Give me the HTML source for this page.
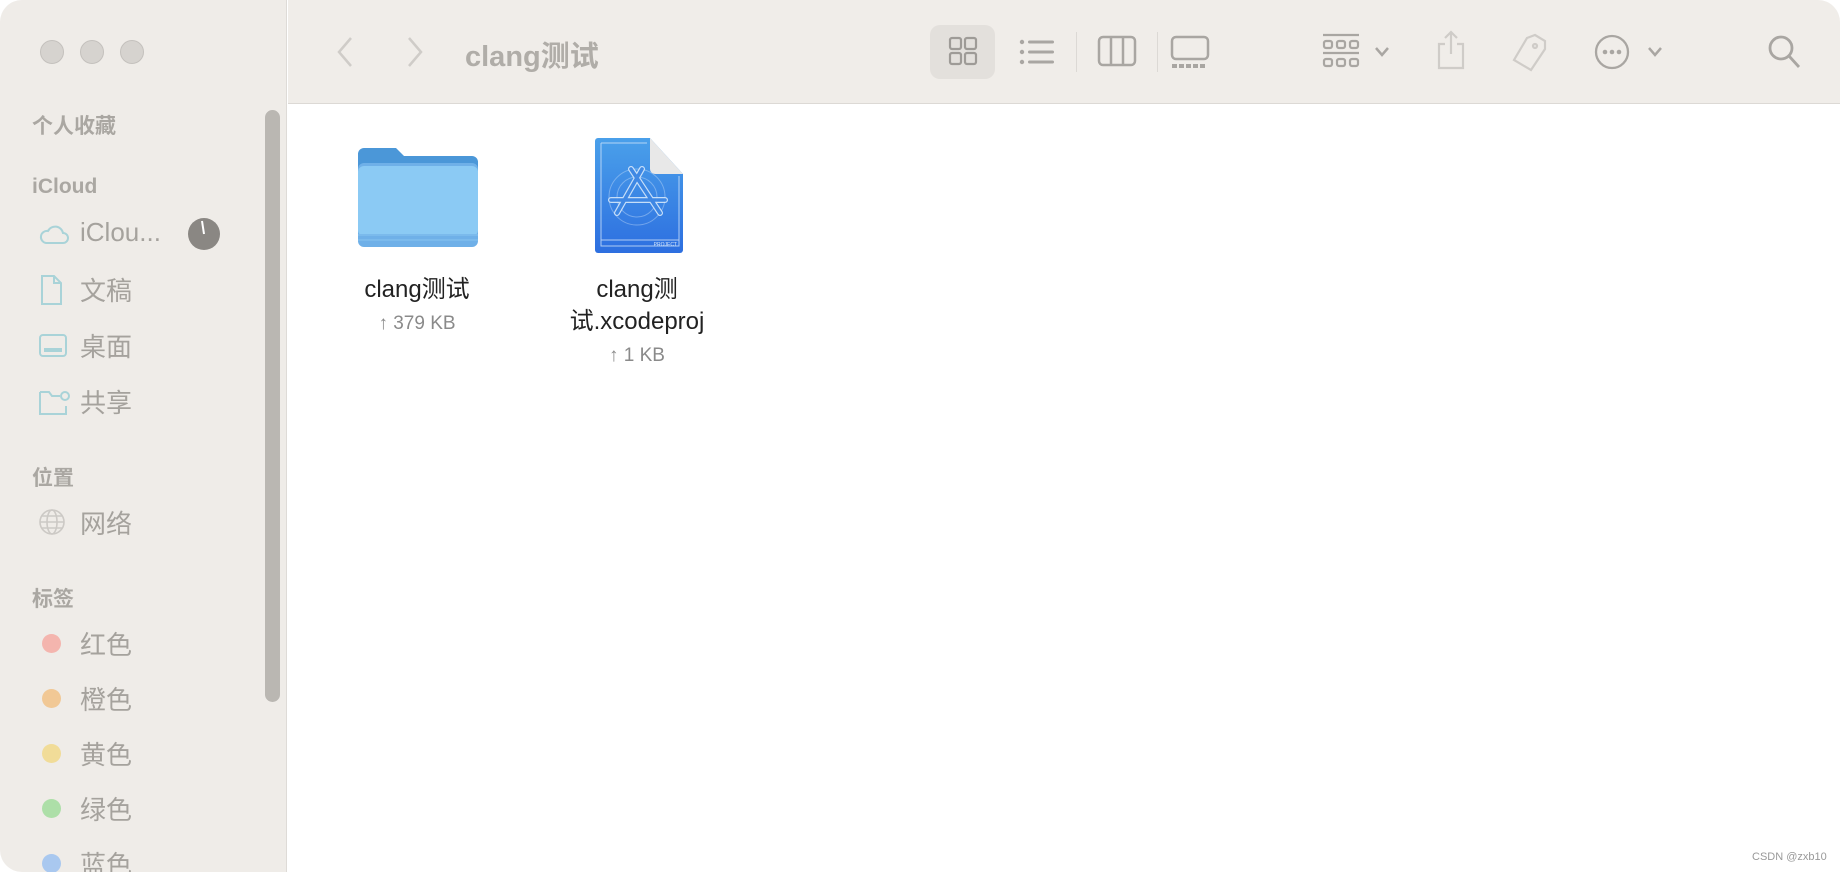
<!DOCTYPE html>
<html><head><meta charset="utf-8">
<style>
*{margin:0;padding:0;box-sizing:border-box}
body{width:1840px;height:872px;overflow:hidden;background:#fff;font-family:"Liberation Sans","Noto Sans CJK SC",sans-serif;position:relative}
.win{position:absolute;left:0;top:0;width:1840px;height:872px;border-radius:22px 22px 0 22px;overflow:hidden;background:#fff}
.side{position:absolute;left:0;top:0;width:287px;height:872px;background:#efece8;border-right:1px solid #dedbd7}
.tool{position:absolute;left:288px;top:0;right:0;height:104px;background:#f0ede9;border-bottom:1px solid #dcd9d5}
.dot{position:absolute;top:40px;width:24px;height:24px;border-radius:50%;background:#d6d3cf;border:1px solid #c4c1bd}
.h{position:absolute;left:32px;font-size:21px;font-weight:bold;color:#aaa7a2}
.it{position:absolute;left:80px;font-size:26px;color:#a5a29d}
.ic{position:absolute;left:38px}
.tag{position:absolute;left:42px;width:19px;height:19px;border-radius:50%}
.scroll{position:absolute;left:265px;top:110px;width:15px;height:592px;border-radius:8px;background:#bab7b2}
.t{position:absolute;color:#aaa7a2}
.lbl{position:absolute;text-align:center;font-size:24px;color:#222;line-height:32px}
.sz{font-size:19px;color:#8a8a8a;line-height:28px}
</style></head><body>
<div class="win">
<div class="side">
 <div class="dot" style="left:40px"></div><div class="dot" style="left:80px"></div><div class="dot" style="left:120px"></div>
 <div class="h" style="top:110px">个人收藏</div>
 <div class="h" style="top:175px">iCloud</div>
 <svg class="ic" style="top:220px" width="32" height="28" viewBox="0 0 32 28"><path d="M8 23h17a5 5 0 0 0 0-10 8 8 0 0 0-15-2 6 6 0 0 0-2 12z" fill="none" stroke="#a9d3d8" stroke-width="2"/></svg>
 <div class="it" style="top:217px">iClou...</div>
 <svg style="position:absolute;left:188px;top:218px" width="32" height="32"><circle cx="16" cy="16" r="16" fill="#8a8783"/><path d="M16 16L14 3" stroke="#fff" stroke-width="2"/></svg>
 <svg class="ic" style="top:274px" width="28" height="32" viewBox="0 0 28 32"><path d="M4 2h12l7 7v21H4z M16 2v7h7" fill="none" stroke="#a9d3d8" stroke-width="2"/></svg>
 <div class="it" style="top:271px">文稿</div>
 <svg class="ic" style="top:332px" width="30" height="28" viewBox="0 0 30 28"><rect x="2" y="3" width="26" height="21" rx="3" fill="none" stroke="#a9d3d8" stroke-width="2"/><path d="M6 18h18" stroke="#a9d3d8" stroke-width="4"/></svg>
 <div class="it" style="top:327px">桌面</div>
 <svg class="ic" style="top:388px" width="32" height="30" viewBox="0 0 32 30"><path d="M2 4h9l3 4h8 M2 4v22h26v-8" fill="none" stroke="#a9d3d8" stroke-width="2"/><circle cx="27" cy="8" r="4" fill="none" stroke="#a9d3d8" stroke-width="2"/></svg>
 <div class="it" style="top:383px">共享</div>
 <div class="h" style="top:462px">位置</div>
 <svg class="ic" style="top:508px" width="28" height="28" viewBox="0 0 28 28"><g fill="none" stroke="#ccc9c5" stroke-width="1.6"><circle cx="14" cy="14" r="12"/><ellipse cx="14" cy="14" rx="5" ry="12"/><path d="M2 14h24M4 8h20M4 20h20"/></g></svg>
 <div class="it" style="top:504px">网络</div>
 <div class="h" style="top:583px">标签</div>
 <div class="tag" style="top:634px;background:#f4b5ae"></div><div class="it" style="top:625px">红色</div>
 <div class="tag" style="top:689px;background:#f1c895"></div><div class="it" style="top:680px">橙色</div>
 <div class="tag" style="top:744px;background:#f1dc98"></div><div class="it" style="top:735px">黄色</div>
 <div class="tag" style="top:799px;background:#addfa8"></div><div class="it" style="top:790px">绿色</div>
 <div class="tag" style="top:854px;background:#a9c8ef"></div><div class="it" style="top:845px">蓝色</div>
 <div class="scroll"></div>
</div>
<div class="tool">
 <svg style="position:absolute;left:48px;top:36px" width="18" height="32"><path d="M15 2L3 16l12 14" fill="none" stroke="#cfccc8" stroke-width="2.5"/></svg>
 <svg style="position:absolute;left:118px;top:36px" width="18" height="32"><path d="M3 2l12 14L3 30" fill="none" stroke="#cfccc8" stroke-width="2.5"/></svg>
 <div class="t" style="left:177px;top:33px;font-size:29px;font-weight:bold;color:#b0ada8">clang测试</div>
 <div style="position:absolute;left:642px;top:25px;width:65px;height:54px;border-radius:10px;background:#e3e0dc"></div>
 <svg style="position:absolute;left:660px;top:36px" width="30" height="30"><g fill="none" stroke="#9e9b97" stroke-width="2.2"><rect x="2" y="2" width="11" height="11" rx="2"/><rect x="17" y="2" width="11" height="11" rx="2"/><rect x="2" y="17" width="11" height="11" rx="2"/><rect x="17" y="17" width="11" height="11" rx="2"/></g></svg>
 <svg style="position:absolute;left:731px;top:38px" width="36" height="28"><g fill="#a9a6a2"><circle cx="3" cy="4" r="2.2"/><circle cx="3" cy="14" r="2.2"/><circle cx="3" cy="24" r="2.2"/><rect x="9" y="2.5" width="26" height="3" rx="1.5"/><rect x="9" y="12.5" width="26" height="3" rx="1.5"/><rect x="9" y="22.5" width="26" height="3" rx="1.5"/></g></svg>
 <div style="position:absolute;left:788px;top:32px;width:1px;height:40px;background:#dcd9d5"></div>
 <svg style="position:absolute;left:809px;top:35px" width="40" height="32"><g fill="none" stroke="#a9a6a2" stroke-width="2.5"><rect x="2" y="2" width="36" height="28" rx="4"/><path d="M14 2v28M26 2v28"/></g></svg>
 <div style="position:absolute;left:869px;top:32px;width:1px;height:40px;background:#dcd9d5"></div>
 <svg style="position:absolute;left:882px;top:35px" width="40" height="34"><g fill="none" stroke="#a9a6a2" stroke-width="2.5"><rect x="2" y="2" width="36" height="22" rx="4"/></g><g fill="#a9a6a2"><rect x="2" y="29" width="5" height="4"/><rect x="9" y="29" width="5" height="4"/><rect x="16" y="29" width="5" height="4"/><rect x="23" y="29" width="5" height="4"/><rect x="30" y="29" width="5" height="4"/></g></svg>
 <svg style="position:absolute;left:1034px;top:33px" width="38" height="38"><g fill="none" stroke="#a9a6a2" stroke-width="2.2"><path d="M1 2h36M1 20h36"/><rect x="2" y="8" width="8" height="7" rx="2"/><rect x="15" y="8" width="8" height="7" rx="2"/><rect x="28" y="8" width="8" height="7" rx="2"/><rect x="2" y="26" width="8" height="7" rx="2"/><rect x="15" y="26" width="8" height="7" rx="2"/><rect x="28" y="26" width="8" height="7" rx="2"/></g></svg>
 <svg style="position:absolute;left:1086px;top:46px" width="16" height="12"><path d="M2 2l6 7 6-7" fill="none" stroke="#a9a6a2" stroke-width="2.5"/></svg>
 <svg style="position:absolute;left:1148px;top:30px" width="30" height="40"><g fill="none" stroke="#cfccc8" stroke-width="2.2"><path d="M15 2v22M9 8l6-6 6 6M9 14H3v24h24V14h-6"/></g></svg>
 <svg style="position:absolute;left:1221px;top:32px" width="40" height="40"><g fill="none" stroke="#cfccc8" stroke-width="2.2"><path d="M26 3l10 6v8L22 38 5 28 18 6z"/><circle cx="26" cy="14" r="2"/></g></svg>
 <svg style="position:absolute;left:1306px;top:34px" width="36" height="36"><circle cx="18" cy="18" r="16" fill="none" stroke="#a9a6a2" stroke-width="2.3"/><g fill="#a9a6a2"><circle cx="11" cy="18" r="2.3"/><circle cx="18" cy="18" r="2.3"/><circle cx="25" cy="18" r="2.3"/></g></svg>
 <svg style="position:absolute;left:1359px;top:46px" width="16" height="12"><path d="M2 2l6 7 6-7" fill="none" stroke="#a9a6a2" stroke-width="2.5"/></svg>
 <svg style="position:absolute;left:1479px;top:34px" width="36" height="36"><g fill="none" stroke="#a9a6a2" stroke-width="2.8"><circle cx="14" cy="14" r="11"/><path d="M22 22l10 11"/></g></svg>
</div>
<!-- folder -->
<svg style="position:absolute;left:358px;top:146px" width="120" height="104" viewBox="0 0 120 104">
 <path d="M0 8a6 6 0 0 1 6-6h32l8 8h68a6 6 0 0 1 6 6v78H0z" fill="#4b97d8"/>
 <rect x="0" y="17" width="120" height="84" rx="6" fill="#6fb0e8"/>
 <rect x="0" y="20" width="120" height="70" rx="6" fill="#8bcaf4"/>
 <rect x="0" y="88" width="120" height="2" fill="#7bbaec"/>
 <rect x="0" y="93" width="120" height="2" fill="#7bbaec"/>
</svg>
<div class="lbl" style="left:332px;top:274px;width:170px">clang测试<br><span class="sz">↑ 379 KB</span></div>
<!-- xcodeproj -->
<svg style="position:absolute;left:595px;top:138px" width="88" height="116" viewBox="0 0 88 116">
 <defs><linearGradient id="g" x1="0" y1="0" x2="0" y2="1"><stop offset="0" stop-color="#4aa0ea"/><stop offset="1" stop-color="#2d6fe0"/></linearGradient></defs>
 <path d="M3 0h52l33 36v76a3 3 0 0 1-3 3H3a3 3 0 0 1-3-3V3a3 3 0 0 1 3-3z" fill="url(#g)"/>
 <path d="M55 0l33 36H60a5 5 0 0 1-5-5z" fill="#e8e8e8"/>
 <g fill="none" stroke="#cfe3fa" stroke-width="1" opacity=".8"><path d="M6 5h46M6 5v103h78V38M6 102h78"/><circle cx="42" cy="59" r="28" opacity=".5"/><circle cx="42" cy="59" r="20" opacity=".5"/></g>
 <g stroke-linecap="round" fill="none" opacity=".9">
  <path d="M47 31L22 75M36 31l29 44M16 62h54" stroke="#d6e8fb" stroke-width="6"/>
  <path d="M47 31L22 75M36 31l29 44M16 62h54" stroke="#3f88e4" stroke-width="3.6"/>
 </g>
 <text x="82" y="108" font-size="5" fill="#d8e8fb" text-anchor="end" font-family="Liberation Sans">PROJECT</text>
</svg>
<div class="lbl" style="left:542px;top:274px;width:190px">clang测<br>试.xcodeproj<br><span class="sz">↑ 1 KB</span></div>
</div>
<div style="position:absolute;left:1752px;top:851px;font-size:11px;color:#999">CSDN @zxb10</div>
</body></html>
